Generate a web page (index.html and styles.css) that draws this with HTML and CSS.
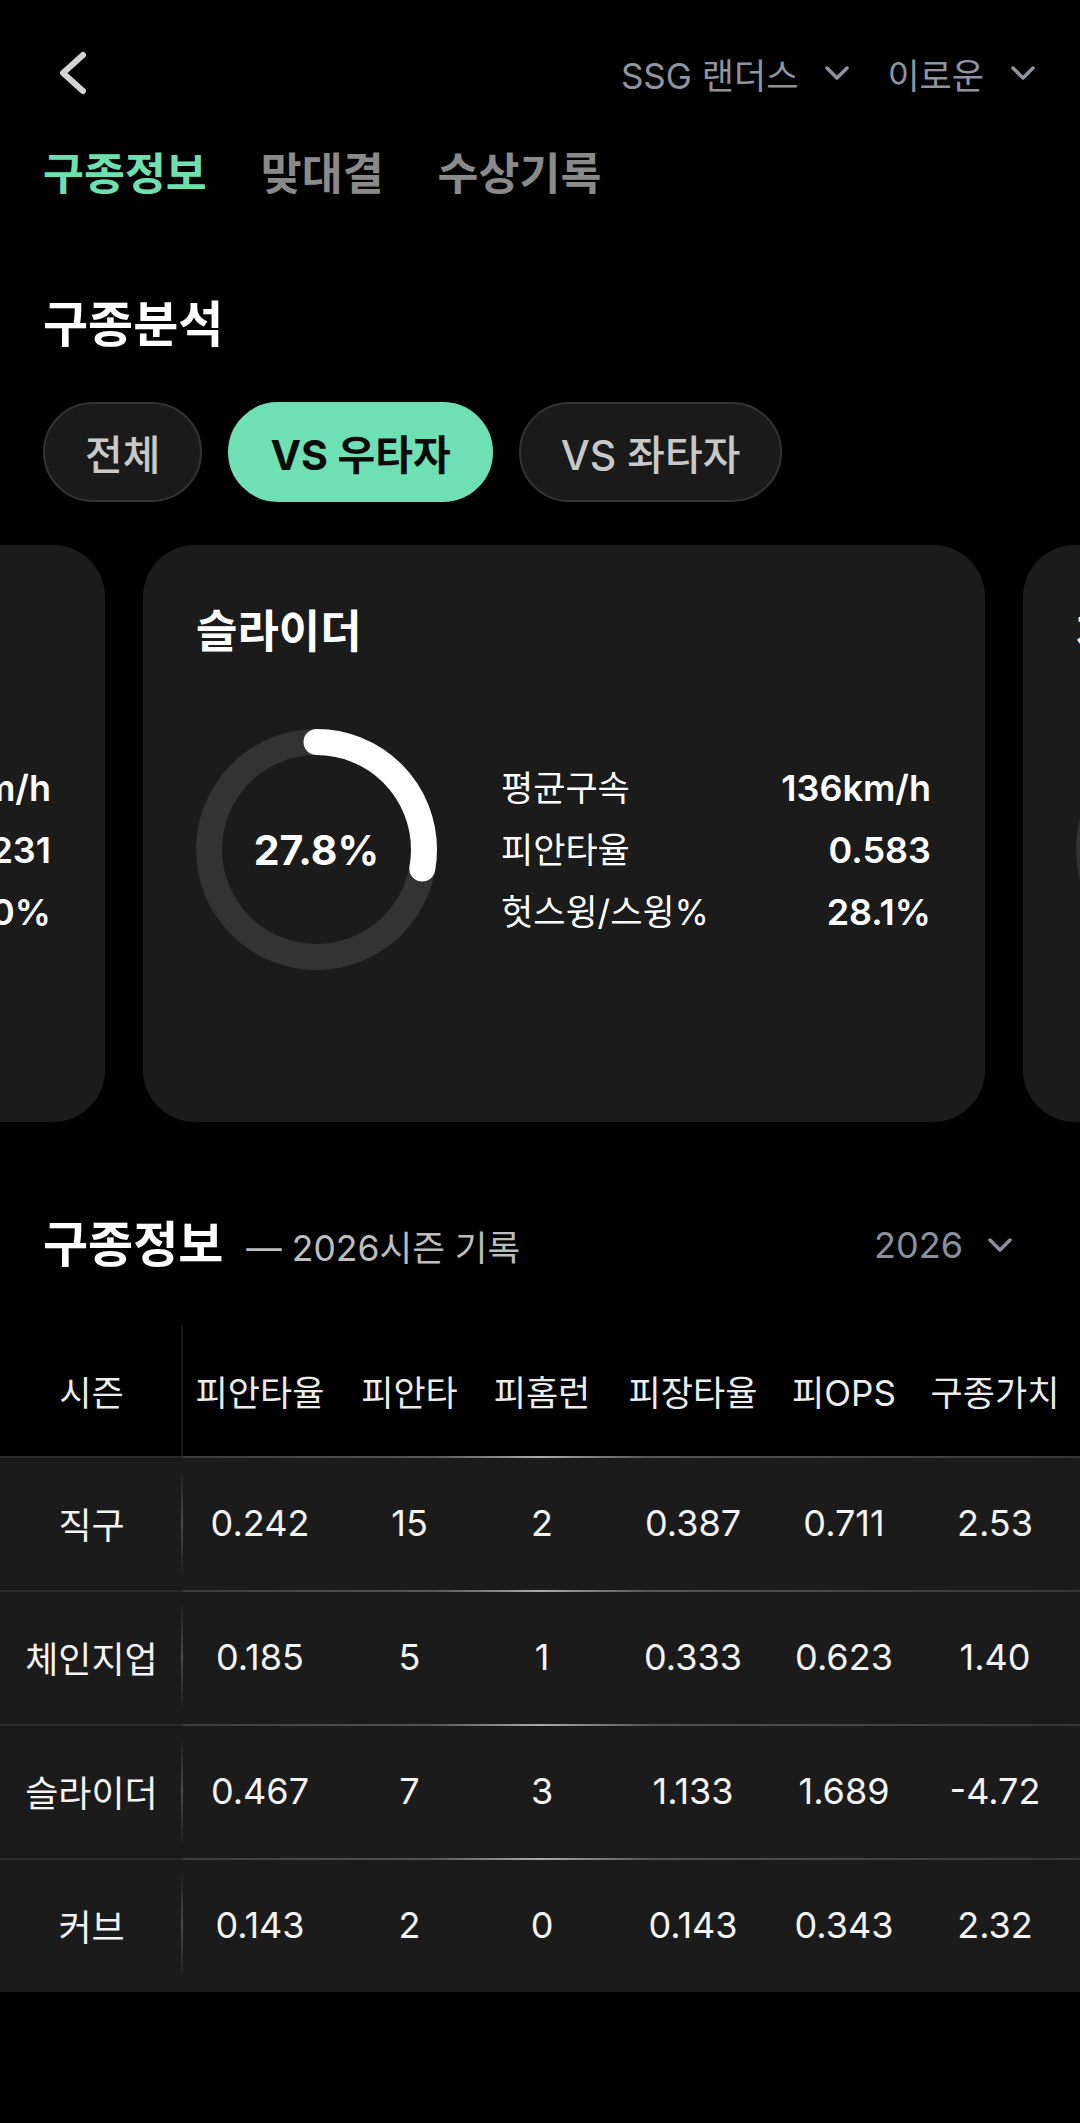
FILE: index.html
```html
<!DOCTYPE html>
<html lang="ko">
  <head>
    <meta charset="UTF-8" />
    <title>구종정보</title>
    <link rel="stylesheet" href="styles.css">
  </head>
  <body>
    <header class="topbar">
      <svg class="back" viewBox="0 0 30 48">
        <polyline points="25,6 5,24 25,42" />
      </svg>
      <div class="pickers">
        <span class="picker">SSG 랜더스
          <svg class="chev" viewBox="0 0 24 14"><polyline points="2,2 12,12 22,2" /></svg>
        </span>
        <span class="picker">이로운
          <svg class="chev" viewBox="0 0 24 14"><polyline points="2,2 12,12 22,2" /></svg>
        </span>
      </div>
    </header>

    <nav class="tabs">
      <span class="tab active">구종정보</span>
      <span class="tab">맞대결</span>
      <span class="tab">수상기록</span>
    </nav>

    <h2 class="section-title">구종분석</h2>

    <div class="filters">
      <button class="pill">전체</button>
      <button class="pill active">VS 우타자</button>
      <button class="pill">VS 좌타자</button>
    </div>

    <div class="carousel">
      <div class="cards">
        <div class="card">
          <h3 class="card-title">직구</h3>
          <div class="card-body">
            <div class="donut">
              <svg viewBox="0 0 241 241">
                <circle class="track" cx="120.5" cy="120.5" r="107.5" />
                <circle class="arc" cx="120.5" cy="120.5" r="107.5" stroke-dasharray="305.3 675.4" />
              </svg>
              <span class="donut-value">45.2%</span>
            </div>
            <dl class="pitch-stats">
              <div><dt>평균구속</dt><dd>146km/h</dd></div>
              <div><dt>피안타율</dt><dd>0.231</dd></div>
              <div><dt>헛스윙/스윙%</dt><dd>18.0%</dd></div>
            </dl>
          </div>
        </div>

        <div class="card">
          <h3 class="card-title">슬라이더</h3>
          <div class="card-body">
            <div class="donut">
              <svg viewBox="0 0 241 241">
                <circle class="track" cx="120.5" cy="120.5" r="107.5" />
                <circle class="arc" cx="120.5" cy="120.5" r="107.5" stroke-dasharray="187.8 675.4" />
              </svg>
              <span class="donut-value">27.8%</span>
            </div>
            <dl class="pitch-stats">
              <div><dt>평균구속</dt><dd>136km/h</dd></div>
              <div><dt>피안타율</dt><dd>0.583</dd></div>
              <div><dt>헛스윙/스윙%</dt><dd>28.1%</dd></div>
            </dl>
          </div>
        </div>

        <div class="card">
          <h3 class="card-title">체인지업</h3>
          <div class="card-body">
            <div class="donut">
              <svg viewBox="0 0 241 241">
                <circle class="track" cx="120.5" cy="120.5" r="107.5" />
                <circle class="arc" cx="120.5" cy="120.5" r="107.5" stroke-dasharray="120.2 675.4" />
              </svg>
              <span class="donut-value">17.8%</span>
            </div>
            <dl class="pitch-stats">
              <div><dt>평균구속</dt><dd>128km/h</dd></div>
              <div><dt>피안타율</dt><dd>0.200</dd></div>
              <div><dt>헛스윙/스윙%</dt><dd>31.4%</dd></div>
            </dl>
          </div>
        </div>
      </div>
    </div>

    <div class="info-head">
      <h2 class="section-title flat">구종정보</h2>
      <span class="info-sub">— 2026시즌 기록</span>
      <span class="season">2026
        <svg class="chev" viewBox="0 0 24 14"><polyline points="2,2 12,12 22,2" /></svg>
      </span>
    </div>

    <div class="stats-table">
      <div class="row head">
        <span>시즌</span><span>피안타율</span><span>피안타</span><span>피홈런</span><span>피장타율</span><span>피OPS</span><span>구종가치</span>
      </div>
      <div class="row body">
        <span>직구</span><span>0.242</span><span>15</span><span>2</span><span>0.387</span><span>0.711</span><span>2.53</span>
      </div>
      <div class="row body">
        <span>체인지업</span><span>0.185</span><span>5</span><span>1</span><span>0.333</span><span>0.623</span><span>1.40</span>
      </div>
      <div class="row body">
        <span>슬라이더</span><span>0.467</span><span>7</span><span>3</span><span>1.133</span><span>1.689</span><span>-4.72</span>
      </div>
      <div class="row body">
        <span>커브</span><span>0.143</span><span>2</span><span>0</span><span>0.143</span><span>0.343</span><span>2.32</span>
      </div>
    </div>
  </body>
</html>
```

FILE: styles.css
```css
* {
  box-sizing: border-box;
}
body {
  margin: 0;
  background: #000;
  color: #fff;
  font-family: Inter, "Noto Sans CJK KR", sans-serif;
  overflow-x: hidden;
}
svg polyline {
  fill: none;
  stroke: currentColor;
  stroke-linecap: round;
  stroke-linejoin: round;
}

/* top bar */
.topbar {
  display: flex;
  align-items: center;
  justify-content: space-between;
  height: 86px;
  margin-top: 30px;
  padding: 0 45px 0 58px;
}
.back {
  width: 30px;
  height: 48px;
  color: #d4d4d4;
  stroke-width: 6;
}
.pickers {
  display: flex;
  gap: 38px;
}
.picker {
  display: flex;
  align-items: center;
  gap: 27px;
  font-size: 35px;
  color: #8e95a0;
}
.chev {
  width: 24px;
  height: 14px;
  stroke-width: 3.5;
}

/* tabs */
.tabs {
  display: flex;
  gap: 54px;
  margin-top: 33px;
  padding-left: 43px;
}
.tab {
  font-size: 44.5px;
  line-height: 50px;
  font-weight: 700;
  color: #8a8a8a;
}
.tab.active {
  color: #6ee0b0;
}

.section-title {
  margin: 98px 0 0;
  padding-left: 43px;
  font-size: 49px;
  line-height: 56px;
  font-weight: 700;
}
.section-title.flat {
  margin: 0;
  padding: 0;
}

/* filter pills */
.filters {
  display: flex;
  gap: 26px;
  margin-top: 49px;
  padding-left: 43px;
}
.pill {
  height: 100px;
  padding: 0 40px;
  border: 2px solid #333;
  border-radius: 50px;
  background: #1a1a1a;
  color: #c8c8c8;
  font: inherit;
  font-size: 41px;
  font-weight: 500;
}
.pill.active {
  background: #6ee0b4;
  border-color: #6ee0b4;
  color: #0a0a0a;
  font-weight: 700;
}

/* pitch cards */
.carousel {
  margin-top: 43px;
  overflow: hidden;
}
.cards {
  display: flex;
  gap: 38px;
  margin-left: -737px;
}
.card {
  flex: 0 0 842px;
  height: 577px;
  padding: 61px 54px 0 53px;
  border-radius: 52px;
  background: #1b1b1b;
}
.card-title {
  margin: 0;
  font-size: 45px;
  line-height: 52px;
  font-weight: 700;
}
.card-body {
  display: flex;
  align-items: center;
  gap: 64px;
  margin-top: 71px;
}
.donut {
  display: grid;
  place-items: center;
  flex: none;
  width: 241px;
  height: 241px;
}
.donut svg,
.donut-value {
  grid-area: 1 / 1;
}
.donut svg {
  width: 241px;
  height: 241px;
  transform: rotate(-90deg);
}
.donut circle {
  fill: none;
  stroke-width: 26;
}
.donut .track {
  stroke: #333;
}
.donut .arc {
  stroke: #fff;
  stroke-linecap: round;
}
.donut-value {
  font-size: 41px;
  font-weight: 700;
}
.pitch-stats {
  flex: 1;
  margin: 0;
}
.pitch-stats div {
  display: flex;
  justify-content: space-between;
  font-size: 35px;
  line-height: 62px;
}
.pitch-stats dt,
.pitch-stats dd {
  margin: 0;
}
.pitch-stats dd {
  font-size: 36px;
  font-weight: 600;
}

/* season table */
.info-head {
  display: flex;
  align-items: center;
  height: 56px;
  margin-top: 95px;
  padding: 0 68px 0 43px;
}
.info-sub {
  margin-left: 23px;
  font-size: 35.5px;
  color: #bdbdbd;
}
.season {
  display: flex;
  align-items: center;
  gap: 25px;
  margin-left: auto;
  font-size: 36px;
  color: #8a909c;
}
.stats-table {
  margin-top: 52px;
  overflow: hidden;
}
.row {
  display: grid;
  grid-template-columns: 183px 154px 145px 120px 182px 120px 182px;
  align-items: center;
  text-align: center;
}
.row > span:first-child {
  align-self: stretch;
  display: flex;
  align-items: center;
  justify-content: center;
}
.row.head {
  height: 131px;
  font-size: 35px;
  color: #ececec;
}
.row.head > span:first-child {
  background: linear-gradient(#161616, #161616) right / 2px 100% no-repeat;
}
.row.body {
  height: 134px;
  font-size: 36px;
  color: #f4f4f4;
  background:
    linear-gradient(to right, #2a2a2a 183px, #3c3c3c 183px, #555 40%, #aaa 50%, #555 60%, #363636) top / 100% 2px no-repeat,
    #1b1b1b;
}
.row.body > span:first-child {
  background: linear-gradient(to bottom, transparent 10%, #4a4a4a 50%, transparent 90%) right / 2px 100% no-repeat;
}
```
